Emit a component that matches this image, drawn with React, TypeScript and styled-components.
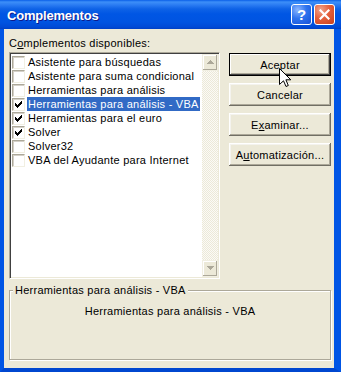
import React from 'react';
import styled, { createGlobalStyle } from 'styled-components';

const Global = createGlobalStyle`
  html, body { margin: 0; padding: 0; background: #fff; }
  body { width: 341px; height: 372px; overflow: hidden; }
  * { box-sizing: border-box; }
`;

const Window = styled.div`
  position: relative;
  width: 341px;
  height: 372px;
  display: flex;
  flex-direction: column;
  font-family: 'Liberation Sans', Arial, sans-serif;
  font-size: 11px;
  letter-spacing: 0.25px;
  color: #000;
`;

const TitleBar = styled.div`
  height: 29px;
  flex: none;
  display: flex;
  align-items: center;
  padding: 0 6px 0 7px;
  background: linear-gradient(180deg, #0a5fe8 0px, #3d8ff8 2px, #2a7bf2 5px, #0e62e6 9px, #0056e4 14px, #0054e1 22px, #004ad6 27px, #0040c4 29px);
`;

const Title = styled.div`
  flex: 1;
  color: #fff;
  font-weight: bold;
  font-size: 13px;
  letter-spacing: -0.2px;
  text-shadow: 1px 1px 0 #0f1a8a;
  margin-top: 2px;
`;

const CapBtn = styled.div<{ $close?: boolean }>`
  width: 21px;
  height: 21px;
  margin-left: 2px;
  border: 1px solid #fff;
  border-radius: 3px;
  display: flex;
  align-items: center;
  justify-content: center;
  background: ${p => p.$close
    ? 'radial-gradient(circle at 30% 25%, #f0a48c 0%, #e4603c 45%, #c8401c 100%)'
    : 'radial-gradient(circle at 30% 25%, #8cb6ff 0%, #2f74ee 45%, #1550d8 100%)'};
  color: #fff;
  font-weight: bold;
  font-size: 15px;
  letter-spacing: 0;
`;

const Frame = styled.div`
  flex: 1;
  display: flex;
  border-left: 4px solid #0055e5;
  border-right: 7px solid #0055e5;
  border-bottom: 4px solid #0047d0;
  box-shadow: inset 1px 0 0 #0831d9, inset -1px 0 0 #0020a8, inset 0 -1px 0 #001e9c;
`;

const Body = styled.div`
  flex: 1;
  background: #ece9d8;
  padding: 8px 3px 0 5px;
  display: flex;
  flex-direction: column;
`;

const Top = styled.div`
  display: grid;
  grid-template-columns: 211px 102px;
  column-gap: 9px;
`;

const LeftCol = styled.div`
  display: flex;
  flex-direction: column;
`;

const Label = styled.div`
  line-height: 13px;
  height: 13px;
  margin-bottom: 2px;
  white-space: nowrap;
`;

const U = styled.span`
  text-decoration: underline;
  text-underline-offset: 1px;
`;

const ListBox = styled.div`
  height: 227px;
  display: flex;
  background: #fff;
  border-style: solid;
  border-width: 1px;
  border-color: #aca899 #fff #fff #aca899;
  box-shadow: inset 1px 1px 0 #404040, inset -1px -1px 0 #ece9d8;
  padding: 1px;
`;

const Items = styled.div`
  flex: 1;
  display: flex;
  flex-direction: column;
  padding-top: 1px;
`;

const Row = styled.div`
  height: 14px;
  display: flex;
  align-items: center;
  padding-left: 1px;
  white-space: nowrap;
`;

const Check = styled.div`
  width: 13px;
  height: 13px;
  flex: none;
  background: #fff;
  border-style: solid;
  border-width: 1px;
  border-color: #aca899 #f1efe2 #f1efe2 #aca899;
  box-shadow: inset 1px 1px 0 #d4d0c8;
  position: relative;
  svg { position: absolute; left: 2px; top: 2px; }
`;

const ItemText = styled.span<{ $sel?: boolean }>`
  margin-left: 2px;
  padding: 0 1px;
  line-height: 14px;
  height: 14px;
  background: ${p => (p.$sel ? '#316ac5' : 'transparent')};
  color: ${p => (p.$sel ? '#fff' : '#000')};
`;

const ScrollBar = styled.div`
  width: 16px;
  flex: none;
  display: flex;
  flex-direction: column;
`;

const ScrollBtn = styled.div`
  height: 17px;
  flex: none;
  background: #ece9d8;
  border: 1px solid #f1efe2;
  box-shadow: inset -1px -1px 0 #aca899, inset 1px 1px 0 #fff;
  display: flex;
  align-items: center;
  justify-content: center;
`;

const Track = styled.div`
  flex: 1;
  background: repeating-conic-gradient(#ece9d8 0 25%, #fbfaf7 0 50%) 0 0 / 2px 2px;
`;

const RightCol = styled.div`
  padding-top: 16px;
  display: flex;
  flex-direction: column;
  gap: 7px;
`;

const Btn = styled.div<{ $def?: boolean }>`
  width: 102px;
  height: 23px;
  display: flex;
  align-items: center;
  justify-content: center;
  background: #ece9d8;
  white-space: nowrap;
  border: ${p => (p.$def ? '1px solid #000' : 'none')};
  box-shadow: ${p => (p.$def
    ? 'inset -1px -1px 0 #404040, inset 1px 1px 0 #fff, inset -2px -2px 0 #aca899'
    : 'inset -1px -1px 0 #716f64, inset 1px 1px 0 #fff, inset -2px -2px 0 #aca899, inset 2px 2px 0 #f4f3ee')};
`;

const Group = styled.div`
  position: relative;
  margin-top: 11px;
  height: 70px;
  border: 1px solid #aca899;
  box-shadow: inset 1px 1px 0 #fff, 1px 1px 0 #fff;
  padding-top: 14px;
  text-align: center;
  line-height: 13px;
`;

const Legend = styled.div`
  position: absolute;
  left: 3px;
  top: -7px;
  padding: 0 2px;
  background: #ece9d8;
  line-height: 13px;
  white-space: nowrap;
`;

const Cursor = styled.svg`
  position: absolute;
  left: 279px;
  top: 68px;
`;

const items = [
  { label: 'Asistente para búsquedas', checked: false },
  { label: 'Asistente para suma condicional', checked: false },
  { label: 'Herramientas para análisis', checked: false },
  { label: 'Herramientas para análisis - VBA', checked: true, sel: true },
  { label: 'Herramientas para el euro', checked: true },
  { label: 'Solver', checked: true },
  { label: 'Solver32', checked: false },
  { label: 'VBA del Ayudante para Internet', checked: false },
];

const CheckMark = () => (
  <svg width="7" height="7" viewBox="0 0 7 7" shapeRendering="crispEdges">
    <path fill="#000" d="M6 0h1v3h-1v1h-1v1h-1v1h-1v1h-1v-1h-1v-1h-1v-3h1v1h1v1h1v-1h1v-1h1z" />
  </svg>
);

const Arrow = ({ up }: { up?: boolean }) => (
  <svg width="7" height="5" viewBox="0 0 7 5" shapeRendering="crispEdges">
    <path fill="#aca899" d={up ? 'M3 0h1v1h1v1h1v1h1v1h-7v-1h1v-1h1v-1h1z' : 'M0 0h7v1h-1v1h-1v1h-1v1h-1v-1h-1v-1h-1v-1h-1z'} />
  </svg>
);

export default function App() {
  return (
    <Window>
      <Global />
      <TitleBar>
        <Title>Complementos</Title>
        <CapBtn>?</CapBtn>
        <CapBtn $close>
          <svg width="11" height="11" viewBox="0 0 11 11">
            <path d="M1.5 1.5 L9.5 9.5 M9.5 1.5 L1.5 9.5" stroke="#fff" strokeWidth="2.2" strokeLinecap="square" />
          </svg>
        </CapBtn>
      </TitleBar>
      <Frame>
        <Body>
          <Top>
            <LeftCol>
              <Label>C<U>o</U>mplementos disponibles:</Label>
              <ListBox>
                <Items>
                  {items.map(it => (
                    <Row key={it.label}>
                      <Check>{it.checked && <CheckMark />}</Check>
                      <ItemText $sel={it.sel}>{it.label}</ItemText>
                    </Row>
                  ))}
                </Items>
                <ScrollBar>
                  <ScrollBtn><Arrow up /></ScrollBtn>
                  <Track />
                  <ScrollBtn><Arrow /></ScrollBtn>
                </ScrollBar>
              </ListBox>
            </LeftCol>
            <RightCol>
              <Btn $def>Aceptar</Btn>
              <Btn>Cancelar</Btn>
              <Btn>E<U>x</U>aminar...</Btn>
              <Btn>A<U>u</U>tomatización...</Btn>
            </RightCol>
          </Top>
          <Group>
            <Legend>Herramientas para análisis - VBA</Legend>
            Herramientas para análisis - VBA
          </Group>
        </Body>
      </Frame>
      <Cursor width="13" height="20" viewBox="0 0 13 20">
        <path d="M0.5 0.5 L0.5 16.5 L4.5 12.8 L7 18.5 L9.3 17.5 L6.9 11.8 L11.8 11.8 Z" fill="#fff" stroke="#000" strokeWidth="1" strokeLinejoin="miter" />
      </Cursor>
    </Window>
  );
}
